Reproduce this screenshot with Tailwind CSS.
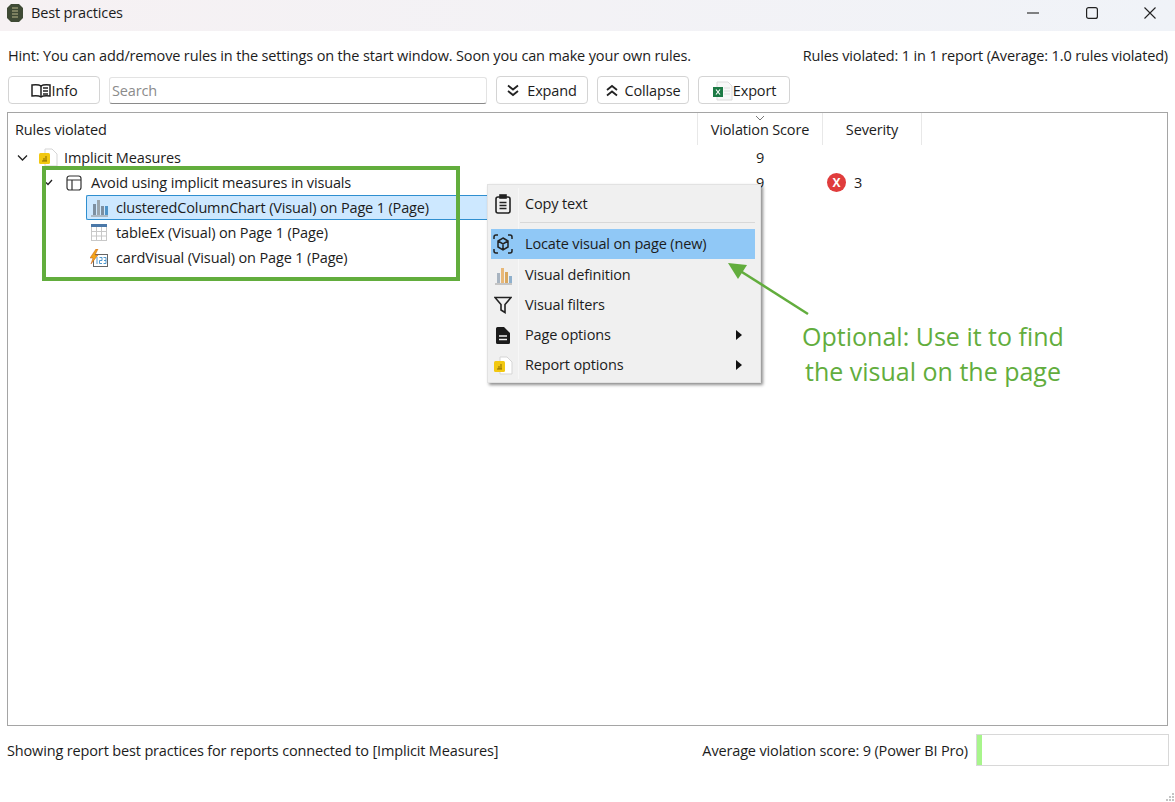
<!DOCTYPE html>
<html lang="en">

<head>
  <meta charset="UTF-8" />
  <title>Best practices</title>
  <script src="https://cdn.jsdelivr.net/npm/@tailwindcss/browser@4"></script>
</head>

<body class="relative w-[1175px] h-[802px] overflow-hidden bg-white text-[14.5px] text-[#1c1c1c] font-['Open_Sans','Noto_Sans',sans-serif] tracking-[-0.15px]">

  <!-- Title bar -->
  <header class="h-[31px] pb-[5px] flex items-center bg-gradient-to-r from-[#f6f1f3] to-[#f0f3f8]">
    <svg class="ml-[6px] w-[18px] h-[20px]" viewBox="0 0 18 20">
      <path d="M5 1h8l4 4v10l-4 4H5l-4-4V5z" fill="#3f4a35" />
      <path d="M6 5h6M6 8h6M6 11h6M6 14h6" stroke="#b9b58a" stroke-width="1.2" />
    </svg>
    <span class="ml-[7px]">Best practices</span>
    <div class="ml-auto flex items-center mr-[19px] gap-[46.5px]">
      <svg class="w-[12px] h-[12px]" viewBox="0 0 12 12"><path d="M0 6h12" stroke="#222" stroke-width="1.1" /></svg>
      <svg class="w-[12px] h-[12px]" viewBox="0 0 12 12"><rect x=".6" y=".6" width="10.800" height="10.800" rx="2" fill="none" stroke="#222" stroke-width="1.200" /></svg>
      <svg class="w-[12px] h-[12px]" viewBox="0 0 12 12"><path d="M.5.5l11 11M11.500.5l-11 11" stroke="#222" stroke-width="1.100" /></svg>
    </div>
  </header>

  <!-- Hint row -->
  <div class="flex justify-between items-center h-[20px] mt-[15px] pl-[8px] pr-[7px]">
    <span>Hint: You can add/remove rules in the settings on the start window. Soon you can make your own rules.</span>
    <span>Rules violated: 1 in 1 report (Average: 1.0 rules violated)</span>
  </div>

  <!-- Toolbar -->
  <div class="flex items-center h-[28px] mt-[10px] pl-[8px]">
    <button class="w-[92px] h-[28px] pt-px flex items-center justify-center gap-[1px] border border-[#d4d4d4] rounded-[4px] bg-white">
      <svg class="w-[20px] h-[16px]" viewBox="0 0 20 16" fill="none" stroke="#222" stroke-width="1.5">
        <path d="M10 3C8 1.500 5 1.500 1 2v11c4-.5 7-.5 9 1 2-1.500 5-1.500 9-1V2c-4-.5-7-.5-9 1z" />
        <path d="M10 3v11M12 5h5M12 8h5M12 11h5" />
      </svg>
      Info
    </button>
    <div class="w-[378px] h-[27px] ml-[9px] pt-px flex items-center pl-[2px] border border-[#e3e3e3] border-b-[#8a8a8a] rounded-[3px] text-[#8b8b8b]">Search</div>
    <button class="w-[92px] h-[28px] ml-[9px] pt-px flex items-center justify-center gap-[8px] border border-[#d4d4d4] rounded-[4px]">
      <svg class="w-[12px] h-[13px]" viewBox="0 0 12 13" fill="none" stroke="#222" stroke-width="1.800"><path d="M1 1.500l5 4 5-4M1 7l5 4 5-4" /></svg>
      Expand
    </button>
    <button class="w-[92px] h-[28px] ml-[9px] pt-px flex items-center justify-center gap-[7px] border border-[#d4d4d4] rounded-[4px]">
      <svg class="w-[12px] h-[13px]" viewBox="0 0 12 13" fill="none" stroke="#222" stroke-width="1.800"><path d="M1 6l5-4 5 4M1 11.500l5-4 5 4" /></svg>
      Collapse
    </button>
    <button class="w-[92px] h-[28px] ml-[9px] pt-px flex items-center justify-center border border-[#d4d4d4] rounded-[4px]">
      <svg class="w-[21px] h-[20px]" viewBox="0 0 21 20">
        <path d="M5 1h11l4 4v14H5z" fill="#f8f8f8" stroke="#dcdcdc" />
        <path d="M12 7h6M12 10h6M12 13h6" stroke="#dedede" />
        <rect x="1" y="6" width="10" height="10" fill="#1d7a45" />
        <path d="M4 8.500l4 5M8 8.500l-4 5" stroke="#fff" stroke-width="1.200" />
      </svg>
      Export
    </button>
  </div>

  <!-- Rules list -->
  <main class="relative mx-[7px] mt-[8px] w-[1161px] h-[614px] border border-[#a5a5a5]">
    <div class="flex h-[32px] items-center">
      <span class="pl-[7px] pt-px w-[689px]">Rules violated</span>
      <div class="relative w-[126px] h-[32px] pt-px flex items-center justify-center border-x border-[#e8e8e8]">
        <svg class="absolute top-[2px] left-[57px] w-[10px] h-[6px]" viewBox="0 0 10 6" fill="none" stroke="#777"><path d="M1 1l4 4 4-4" /></svg>
        Violation Score
      </div>
      <div class="w-[99px] h-[32px] pt-px flex items-center justify-center border-r border-[#e8e8e8]">Severity</div>
    </div>

    <!-- Rows -->
    <div class="flex items-center h-[25px]">
      <svg class="ml-[9px] w-[11px] h-[8px]" viewBox="0 0 11 8" fill="none" stroke="#222" stroke-width="1.300"><path d="M1 1.500l4.500 4.500L10 1.500" /></svg>
      <svg class="ml-[11px] w-[19px] h-[19px]" viewBox="0 0 19 19">
        <path d="M6 1h7l5 5v12H6z" fill="#fff" stroke="#d5d5d5" />
        <rect x="0" y="5" width="11" height="11" rx="1.500" fill="#f2c811" />
        <path d="M3 13h5M7 8v5M5 10v3" stroke="#8a6d00" stroke-width="1" />
      </svg>
      <span class="ml-[6px]">Implicit Measures</span>
      <span class="absolute left-[748px]">9</span>
    </div>
    <div class="flex items-center h-[25px]">
      <svg class="ml-[37px] w-[8px] h-[7px]" viewBox="0 0 8 7" fill="none" stroke="#222" stroke-width="1.300"><path d="M1 3.500l2 2L7 1" /></svg>
      <svg class="ml-[13px] w-[16px] h-[16px]" viewBox="0 0 16 16" fill="none" stroke="#333" stroke-width="1.200">
        <rect x="1" y="1" width="14" height="14" rx="2.500" />
        <path d="M1 5h14M6 5v10" />
      </svg>
      <span class="ml-[9px]">Avoid using implicit measures in visuals</span>
      <span class="absolute left-[748px]">9</span>
      <span class="absolute left-[819px] w-[19px] h-[19px] flex items-center justify-center rounded-full bg-[#e03c3c] text-white text-[12px] font-bold">X</span>
      <span class="absolute left-[846px]">3</span>
    </div>
    <div class="flex items-center h-[25px]">
      <div class="ml-[78px] w-[410px] h-[25px] flex items-center bg-[#cde8ff] border border-[#2f8fd0] rounded-l-[2px] border-r-0">
        <svg class="ml-[3px] w-[19px] h-[19px]" viewBox="0 0 19 19">
          <path d="M3 6h3v11H3z" fill="#7d8fa0" />
          <path d="M7 2h3v15H7z" fill="#9aa5ad" />
          <path d="M11 8h3v9h-3z" fill="#7d8fa0" />
          <path d="M15 8h3v9h-3z" fill="#4f94c8" />
          <path d="M1 18h17" fill="none" stroke="#8a8a8a" />
        </svg>
        <span class="ml-[7px]">clusteredColumnChart (Visual) on Page 1 (Page)</span>
      </div>
    </div>
    <div class="flex items-center h-[25px]">
      <svg class="ml-[83px] w-[16px] h-[17px]" viewBox="0 0 16 17">
        <rect x=".5" y=".5" width="15" height="16" fill="#fff" stroke="#c8c8c8" />
        <rect x="0" y="0" width="16" height="3" fill="#4a78a8" />
        <path d="M5.500 3v14M10.500 3v14M0 7.500h16M0 12h16" stroke="#c8c8c8" />
      </svg>
      <span class="ml-[9px]">tableEx (Visual) on Page 1 (Page)</span>
    </div>
    <div class="flex items-center h-[25px]">
      <svg class="ml-[82px] w-[18px] h-[18px]" viewBox="0 0 18 18">
        <rect x="3.500" y="5.500" width="14" height="12" fill="#fff" stroke="#666" />
        <path d="M6 0L0 9h3l-2 6 7-9H5l3-6z" fill="#f2a51a" stroke="#c45a1a" stroke-width=".5" />
        <path d="M7 8v7M9.500 8.500h2.500v3h-2.500v3h2.500M13.500 8.500h2.500v6h-2.500M14 11.500h2" fill="none" stroke="#3f8fc9" stroke-width=".9" />
      </svg>
      <span class="ml-[8px]">cardVisual (Visual) on Page 1 (Page)</span>
    </div>

    <!-- Green annotation box -->
    <div class="absolute left-[34px] top-[53px] w-[418px] h-[115px] border-[4px] border-[#62ad3d]"></div>

    <!-- Context menu -->
    <div class="absolute left-[479px] top-[71px] w-[274px] h-[199px] pt-[3px] pl-[3px] pr-[5px] bg-[#f0f0f0] border border-[#e2e2e2] shadow-[2px_2px_3px_rgba(0,0,0,0.45)]">
      <div class="absolute left-[30px] top-[3px] bottom-[3px] w-px bg-[#f7f7f7]"></div>
      <div class="flex items-center h-[31px]">
        <span class="w-[24px] flex justify-center">
          <svg class="w-[18px] h-[20px]" viewBox="0 0 18 20" fill="none" stroke="#222" stroke-width="1.600">
            <rect x="2" y="3" width="14" height="16" rx="2" />
            <rect x="6" y="1" width="6" height="3" fill="#222" />
            <path d="M5.500 8.500h7M5.500 11.500h7M5.500 14.500h7" />
          </svg>
        </span>
        <span class="ml-[10px]">Copy text</span>
      </div>
      <div class="h-px ml-[29px] mt-[3px] mb-[2px] bg-[#d8d8d8]"></div>
      <div class="relative mt-[6px] flex items-center h-[30px] bg-[#90c8f6]">
        <span class="w-[24px] flex justify-center">
          <svg class="w-[20px] h-[20px]" viewBox="0 0 20 20" fill="none" stroke="#222" stroke-width="1.500">
            <path d="M1 5V3a2 2 0 012-2h2M15 1h2a2 2 0 012 2v2M19 15v2a2 2 0 01-2 2h-2M5 19H3a2 2 0 01-2-2v-2" />
            <path d="M10 4l5 3v6l-5 3-5-3V7zM5 7l5 3 5-3M10 10v6" />
          </svg>
        </span>
        <span class="ml-[10px]">Locate visual on page (new)</span>
      </div>
      <div class="mt-px flex items-center h-[30px]">
        <span class="w-[24px] flex justify-center">
          <svg class="w-[19px] h-[19px]" viewBox="0 0 19 19">
            <path d="M3 7h3v10H3z" fill="#a8b4c0" /><path d="M7 2h3v15H7z" fill="#e8b878" /><path d="M11 6h3v11h-3z" fill="#d9a860" /><path d="M15 10h3v7h-3z" fill="#8fb0cc" />
            <path d="M1 18h17" fill="none" stroke="#9a9a9a" />
          </svg>
        </span>
        <span class="ml-[10px]">Visual definition</span>
      </div>
      <div class="flex items-center h-[30px]">
        <span class="w-[24px] flex justify-center">
          <svg class="w-[18px] h-[18px]" viewBox="0 0 18 18" fill="none" stroke="#222" stroke-width="1.600"><path d="M1 1.500h16l-6 7v8l-4-2.500V8.500z" /></svg>
        </span>
        <span class="ml-[10px]">Visual filters</span>
      </div>
      <div class="relative flex items-center h-[30px]">
        <span class="w-[24px] flex justify-center">
          <svg class="w-[14px] h-[17px]" viewBox="0 0 14 17">
            <path d="M0 1.500A1.500 1.500 0 011.500 0H8l6 6v9.500a1.500 1.500 0 01-1.500 1.500h-11A1.500 1.500 0 010 15.500z" fill="#1a1a1a" />
            <path d="M3 9h8M3 12.500h8" stroke="#f0f0f0" stroke-width="1.400" />
          </svg>
        </span>
        <span class="ml-[10px]">Page options</span>
        <svg class="absolute left-[245px] top-[10px] w-[6px] h-[10px]" viewBox="0 0 6 10"><path d="M0 0l6 5-6 5z" fill="#111" /></svg>
      </div>
      <div class="relative flex items-center h-[30px]">
        <span class="w-[24px] flex justify-center">
          <svg class="w-[19px] h-[19px]" viewBox="0 0 19 19">
            <path d="M6 1h7l5 5v12H6z" fill="#fff" stroke="#d5d5d5" />
            <rect x="0" y="5" width="11" height="11" rx="1.500" fill="#f2c811" />
            <path d="M3 13h5M7 8v5M5 10v3" stroke="#8a6d00" stroke-width="1" />
          </svg>
        </span>
        <span class="ml-[10px]">Report options</span>
        <svg class="absolute left-[245px] top-[10px] w-[6px] h-[10px]" viewBox="0 0 6 10"><path d="M0 0l6 5-6 5z" fill="#111" /></svg>
      </div>
    </div>

    <!-- Green arrow and note -->
    <svg class="absolute left-[710px] top-[140px] w-[100px] h-[70px]" viewBox="0 0 100 70">
      <path d="M90 61L16 14" stroke="#62ad3d" stroke-width="2.500" fill="none" />
      <path d="M10 10l19 2-9 14z" fill="#62ad3d" />
    </svg>
    <div class="absolute left-[770px] top-[206px] w-[310px] text-center text-[25px] leading-[35px] tracking-normal text-[#62ad3d]">Optional: Use it to find<br />the visual on the page</div>
  </main>

  <!-- Status bar -->
  <footer class="flex items-center h-[32px] mt-[8px] pl-[7px]">
    <span class="pt-[2px]">Showing report best practices for reports connected to [Implicit Measures]</span>
    <span class="ml-auto pt-[2px]">Average violation score: 9 (Power BI Pro)</span>
    <div class="ml-[8px] mr-[6px] w-[193px] h-[32px] border border-[#d8d8d8] bg-white">
      <div class="w-[5px] h-full bg-[#a8f58c]"></div>
    </div>
  </footer>

  <!-- Resize grip -->
  <svg class="absolute right-0 bottom-0 w-[9px] h-[9px]" viewBox="0 0 9 9" fill="#c4c4c4">
    <rect x="6" y="0" width="2" height="2" /><rect x="3" y="3" width="2" height="2" /><rect x="6" y="3" width="2" height="2" />
    <rect x="0" y="6" width="2" height="2" /><rect x="3" y="6" width="2" height="2" /><rect x="6" y="6" width="2" height="2" />
  </svg>
</body>

</html>
